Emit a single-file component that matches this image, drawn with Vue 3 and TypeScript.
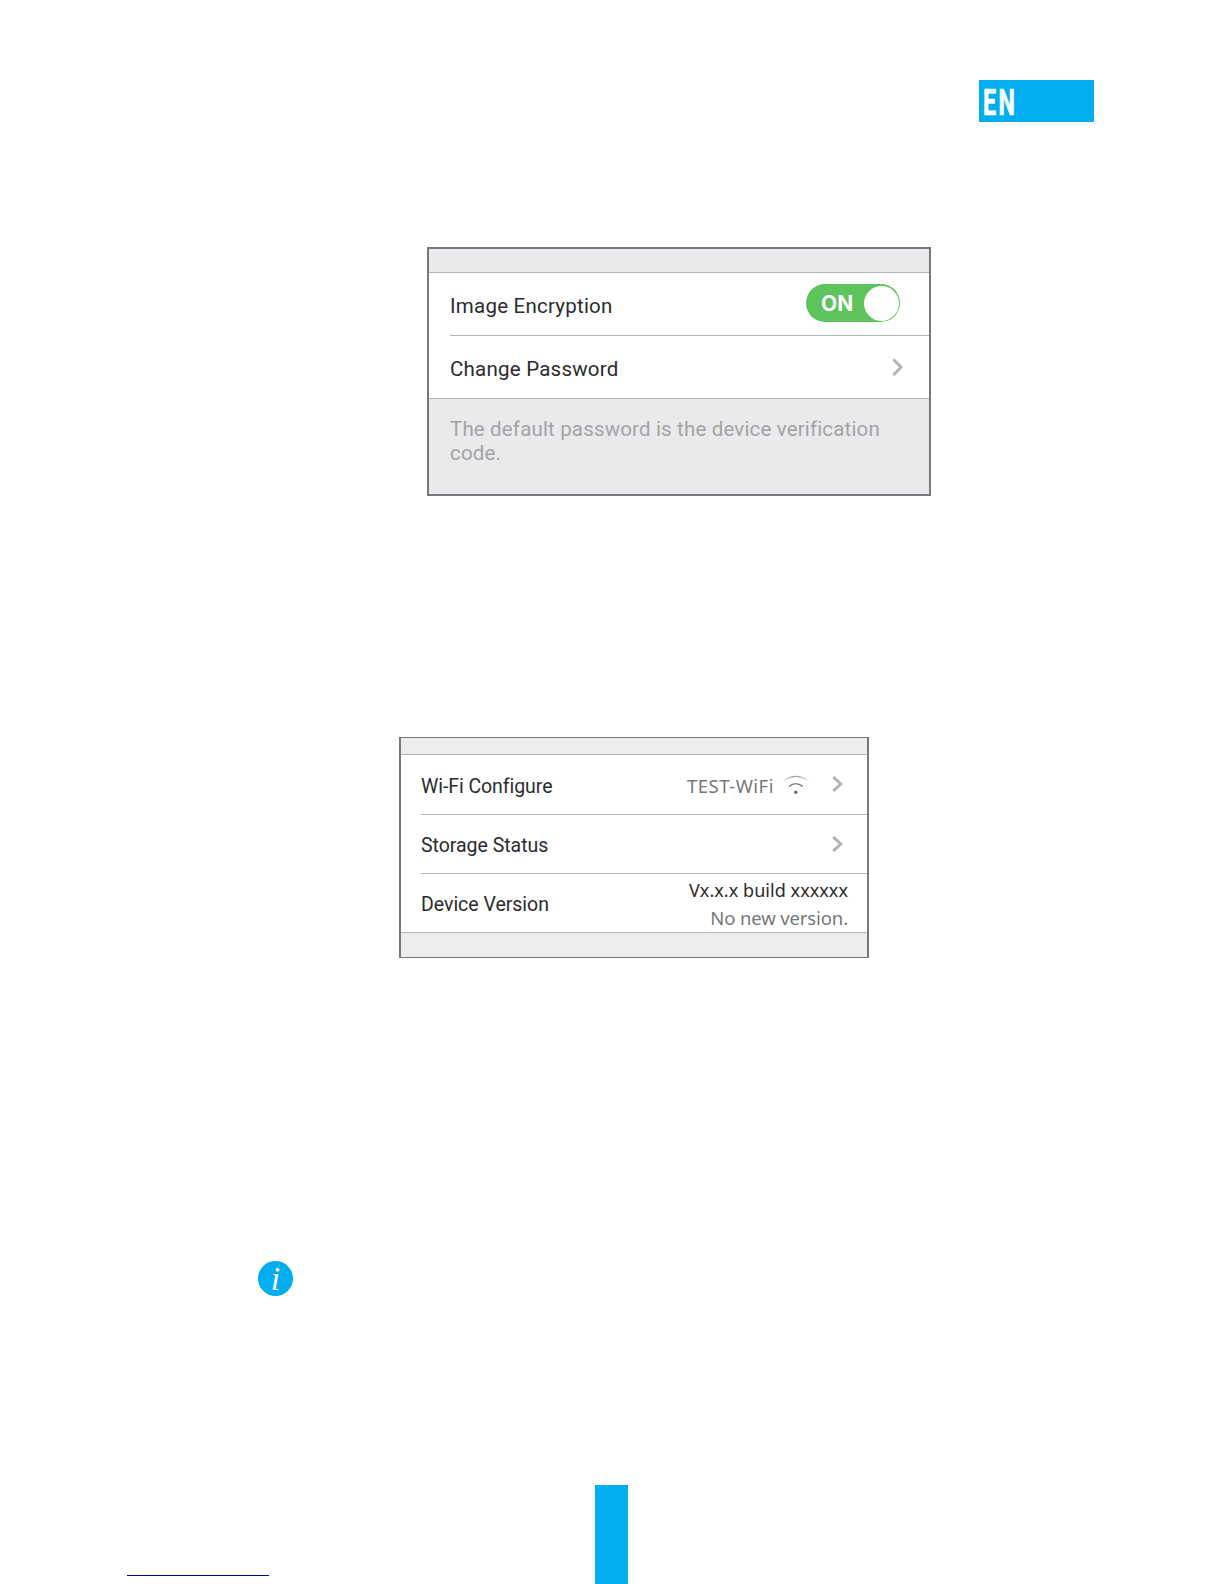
<script setup lang="ts">
import { ref } from 'vue'

defineOptions({
  name: 'ManualPage'
})

type DeviceRow = {
  key: string
  label: string
  network?: string
  version?: string
  versionHint?: string
  link?: boolean
}

const language = 'EN'

const encryptionOn = ref(true)

const deviceRows: DeviceRow[] = [
  { key: 'wifi', label: 'Wi-Fi Configure', network: 'TEST-WiFi', link: true },
  { key: 'storage', label: 'Storage Status', link: true },
  { key: 'version', label: 'Device Version', version: 'Vx.x.x build xxxxxx', versionHint: 'No new version.' }
]

const toggleEncryption = () => {
  encryptionOn.value = !encryptionOn.value
}
</script>

<template>
  <div class="page">
    <header class="page__header">
      <div class="language-tab">
        <span class="language-tab__text">{{ language }}</span>
      </div>
    </header>

    <section class="encryption">
      <div class="encryption__strip"></div>
      <div class="encryption__list">
        <div class="encryption__row">
          <span class="encryption__label">Image Encryption</span>
          <button
            type="button"
            class="switch"
            :class="{ 'switch--off': !encryptionOn }"
            aria-label="Image Encryption"
            @click="toggleEncryption"
          >
            <span class="switch__text">{{ encryptionOn ? 'ON' : 'OFF' }}</span>
            <span class="switch__knob"></span>
          </button>
        </div>
        <div class="encryption__row encryption__row--last">
          <span class="encryption__label">Change Password</span>
          <svg class="encryption__chevron" width="11" height="19" viewBox="0 0 11 19">
            <path d="M2.2 2.3 L9 9.2 L2.2 16.1" />
          </svg>
        </div>
      </div>
      <p class="encryption__hint">The default password is the device verification<br />code.</p>
    </section>

    <section class="device">
      <div class="device__strip"></div>
      <div class="device__list">
        <div v-for="row in deviceRows" :key="row.key" class="device__row">
          <span class="device__label">{{ row.label }}</span>
          <div v-if="row.link" class="device__link">
            <span v-if="row.network" class="device__network">{{ row.network }}</span>
            <svg v-if="row.network" class="device__wifi" width="26" height="20" viewBox="0 0 26 20">
              <path class="device__wifi-outer" d="M0.3 5.7 Q12.8 -4.3 25.3 5.7 Q12.8 -1.5 0.3 5.7 Z" />
              <path class="device__wifi-inner" d="M6 11.4 Q12.8 5.8 19.6 11.4" />
              <circle cx="12.8" cy="17.2" r="1.7" />
            </svg>
            <svg class="device__chevron" width="11" height="17" viewBox="0 0 11 17">
              <path d="M2.2 1.9 L8.9 8 L2.2 14.1" />
            </svg>
          </div>
          <div v-else class="device__version">
            <span class="device__version-name">{{ row.version }}</span>
            <span class="device__version-hint">{{ row.versionHint }}</span>
          </div>
        </div>
      </div>
    </section>

    <div class="info-badge">
      <span class="info-badge__letter">i</span>
    </div>

    <footer class="page__footer">
      <div class="page__rule"></div>
      <div class="page__marker"></div>
    </footer>
  </div>
</template>

<style>
body {
  margin: 0;
  background: #fff;
}
</style>

<style scoped>
.page {
  width: 1224px;
  height: 1584px;
  box-sizing: border-box;
  padding-top: 80px;
  display: flex;
  flex-direction: column;
  align-items: flex-start;
  overflow: hidden;
  background: #fff;
  font-family: Roboto, 'Liberation Sans', sans-serif;
}

.page__header {
  width: 1094px;
  display: flex;
  justify-content: flex-end;
}

.language-tab {
  width: 115px;
  height: 42px;
  box-sizing: border-box;
  padding: 2px 0 0 3.5px;
  display: flex;
  align-items: center;
  background: #00aeef;
}

.language-tab__text {
  display: block;
  font-size: 37.5px;
  line-height: 40px;
  font-weight: 700;
  letter-spacing: 4px;
  color: #fff;
  transform: scaleX(0.62);
  transform-origin: 0 50%;
  -webkit-text-stroke: 0.7px #fff;
}

.encryption {
  width: 504px;
  height: 249px;
  box-sizing: border-box;
  margin: 125px 0 0 427px;
  border: 2px solid #77787b;
  background: #eaeaec;
}

.encryption__strip {
  height: 23px;
}

.encryption__list {
  padding-left: 21px;
  background: #fff;
  border-top: 1px solid #b3b4b6;
  border-bottom: 1px solid #b3b4b6;
}

.encryption__row {
  height: 63px;
  box-sizing: border-box;
  display: flex;
  align-items: center;
  justify-content: space-between;
  padding-right: 29px;
  border-bottom: 1px solid #b3b4b6;
}

.encryption__row--last {
  height: 62px;
  padding-right: 26px;
  border-bottom: none;
}

.encryption__label {
  padding-top: 3px;
  font-size: 20.5px;
  line-height: 24px;
  letter-spacing: 0.23px;
  color: #2b2b2d;
}

.encryption__chevron,
.device__chevron {
  fill: none;
  stroke: #b4b4b6;
  stroke-width: 3;
  stroke-linecap: round;
  stroke-linejoin: miter;
}

.encryption__hint {
  margin: 18px 0 0 21px;
  font-size: 20.5px;
  line-height: 24px;
  letter-spacing: 0.16px;
  white-space: nowrap;
  color: #a3a3a6;
}

.switch {
  appearance: none;
  border: none;
  width: 94px;
  height: 38px;
  margin-bottom: 2px;
  padding: 0 1.5px 0 15px;
  border-radius: 19px;
  display: flex;
  align-items: center;
  justify-content: space-between;
  background: #5dc35b;
  cursor: pointer;
}

.switch--off {
  background: #c4c4c6;
}

.switch__text {
  padding-top: 1px;
  font-family: Inter, 'Open Sans', sans-serif;
  font-size: 21px;
  line-height: 24px;
  font-weight: 700;
  color: #fff;
}

.switch__knob {
  width: 35px;
  height: 35px;
  border-radius: 50%;
  background: #fff;
}

.device {
  width: 470px;
  height: 221px;
  box-sizing: border-box;
  margin: 241px 0 0 399px;
  border: solid #77787b;
  border-width: 1px 2px;
  background: #ebedee;
}

.device__strip {
  height: 16px;
}

.device__list {
  padding-left: 20px;
  background: #fff;
  border-top: 1px solid #b3b4b6;
}

.device__row {
  height: 59px;
  box-sizing: border-box;
  display: flex;
  align-items: center;
  justify-content: space-between;
  border-bottom: 1px solid #b3b4b6;
}

.device__row:first-child {
  height: 60px;
}

.device__row:last-child {
  margin-left: -20px;
  padding-left: 20px;
}

.device__label {
  padding-top: 3px;
  font-size: 19.5px;
  line-height: 24px;
  letter-spacing: -0.02px;
  color: #2b2b2d;
}

.device__row:first-child .device__label {
  padding-top: 4px;
  letter-spacing: -0.06px;
}

.device__row:last-child .device__label {
  padding-top: 4px;
}

.device__link {
  display: flex;
  align-items: center;
  padding-right: 24px;
}

.device__network {
  padding-top: 2px;
  font-family: 'Noto Sans', 'Open Sans', sans-serif;
  font-size: 18.5px;
  line-height: 24px;
  letter-spacing: 0.5px;
  color: #77777a;
}

.device__wifi {
  margin: 1px 23px 0 9px;
  fill: #6d6e71;
}

.device__wifi-outer {
  fill: #a5a6a8;
}

.device__wifi-inner {
  fill: none;
  stroke: #77787b;
  stroke-width: 1.4;
}

.device__version {
  display: flex;
  flex-direction: column;
  align-items: flex-end;
  padding: 2px 19px 0 0;
  font-family: 'Noto Sans', 'Open Sans', sans-serif;
  line-height: 27px;
  white-space: nowrap;
}

.device__version-name {
  font-size: 18px;
  letter-spacing: 0.05px;
  color: #2b2b2d;
}

.device__version-hint {
  font-size: 18.5px;
  letter-spacing: -0.12px;
  color: #77777a;
}

.info-badge {
  width: 35px;
  height: 35px;
  margin: 303px 0 0 258px;
  border-radius: 50%;
  display: flex;
  align-items: center;
  justify-content: center;
  background: #00aeef;
}

.info-badge__letter {
  font-family: 'Liberation Serif', serif;
  font-size: 34px;
  line-height: 35px;
  font-style: italic;
  color: #fff;
}

.page__footer {
  height: 99px;
  margin-top: auto;
  padding-left: 127px;
  display: flex;
  align-items: flex-end;
}

.page__rule {
  width: 142px;
  height: 1px;
  margin: 0 326px 8px 0;
  background: #08088c;
}

.page__marker {
  width: 33px;
  height: 99px;
  background: #00aeef;
}
</style>
